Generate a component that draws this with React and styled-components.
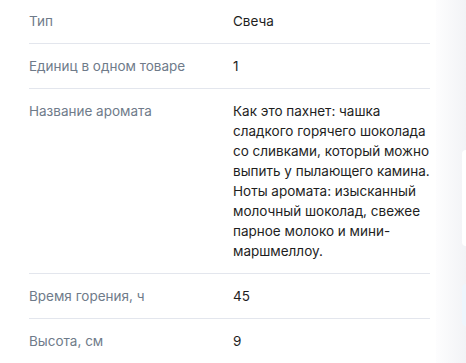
import React from "react";
import styled, { createGlobalStyle } from "styled-components";

const Global = createGlobalStyle`
  html, body { margin: 0; padding: 0; background: #fff; }
  body { font-family: "Inter", "Noto Sans", sans-serif; overflow: hidden; }
`;

const Page = styled.div`
  display: flex;
  width: 466px;
  height: 363px;
  overflow: hidden;
`;

const Main = styled.div`
  flex: 0 0 436px;
  padding-left: 29px;
  padding-right: 6px;
  box-sizing: border-box;
`;

const List = styled.dl`
  margin: -1px 0 0;
`;

const Row = styled.div`
  display: grid;
  grid-template-columns: 204px 1fr;
  padding: 12px 0;
  border-bottom: 1px solid #e3e6ed;
  font-size: 13.5px;
  line-height: 20px;
  &:last-child { border-bottom: none; }
`;

const Label = styled.dt`
  color: #6f7b8a;
  margin: 0;
`;

const Value = styled.dd`
  color: #1e1e1e;
  margin: 0;
  white-space: pre-line;
`;

const Aside = styled.aside`
  flex: 1;
  background: linear-gradient(90deg, #fdfdfe 0%, #f2f3f6 100%);
  display: flex;
  flex-direction: column;
  padding-left: 26px;
`;

const Card = styled.div`
  height: ${(p) => p.$h}px;
  margin-top: ${(p) => p.$top}px;
  background: ${(p) => p.$bg};
  border-radius: 12px 0 0 12px;
`;

const rows = [
  ["Тип", "Свеча"],
  ["Единиц в одном товаре", "1"],
  [
    "Название аромата",
    "Как это пахнет: чашка\nсладкого горячего шоколада\nсо сливками, который можно\nвыпить у пылающего камина.\nНоты аромата: изысканный\nмолочный шоколад, свежее\nпарное молоко и мини-\nмаршмеллоу.",
  ],
  ["Время горения, ч", "45"],
  ["Высота, см", "9"],
];

export default function App() {
  return (
    <>
      <Global />
      <Page>
        <Main>
          <List>
            {rows.map(([l, v]) => (
              <Row key={l}>
                <Label>{l}</Label>
                <Value>{v}</Value>
              </Row>
            ))}
          </List>
        </Main>
        <Aside>
          <Card $top={150} $h={96} $bg="#ffffff" />
          <Card $top={38} $h={42} $bg="#eef6fd" />
        </Aside>
      </Page>
    </>
  );
}
